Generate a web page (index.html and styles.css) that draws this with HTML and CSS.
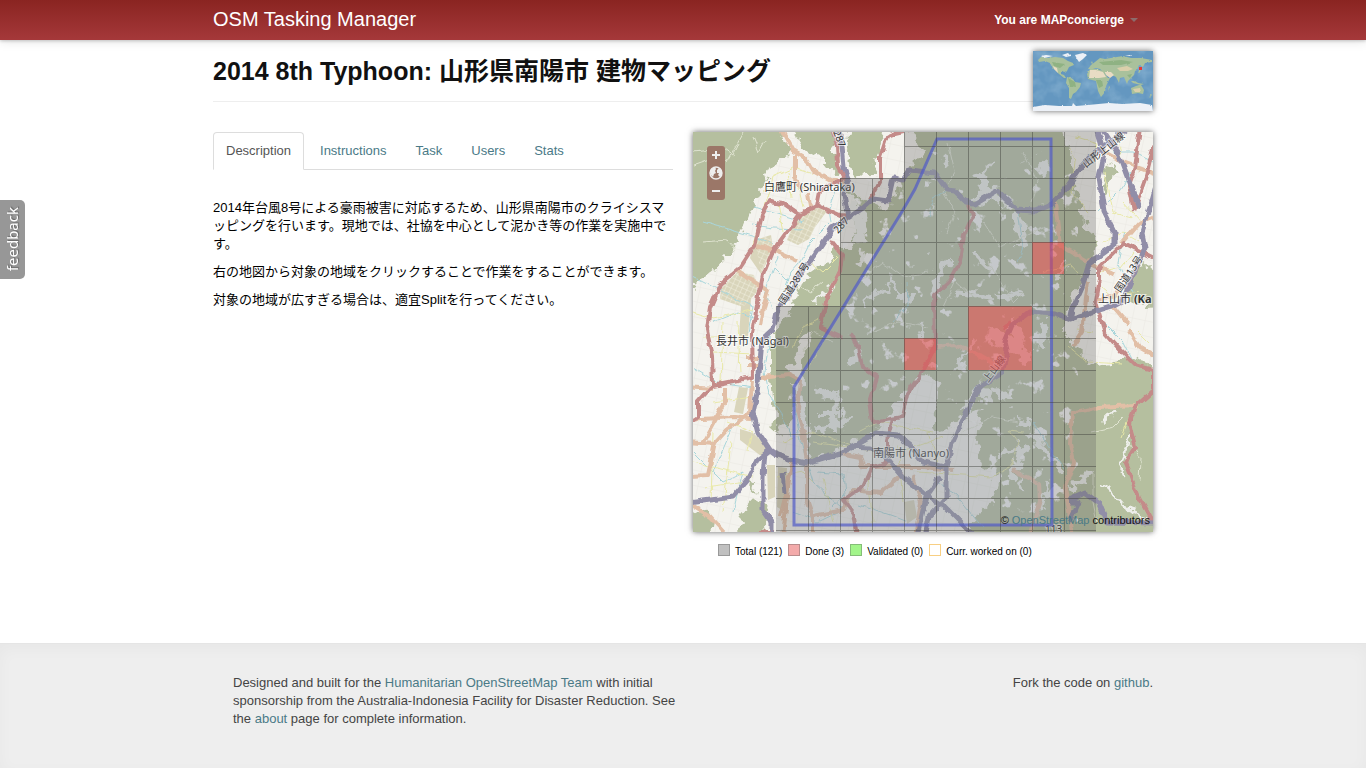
FILE: index.html
```html
<!DOCTYPE html>
<html lang="ja">
<head>
<meta charset="utf-8">
<meta name="viewport" content="width=device-width, initial-scale=1">
<title>OSM Tasking Manager</title>
<link rel="stylesheet" href="styles.css">
</head>
<body>
<header class="navbar">
  <div class="container navbar-inner">
    <a class="brand" href="#">OSM Tasking Manager</a>
    <button class="user-menu" type="button">You are MAPconcierge<span class="caret"></span></button>
  </div>
</header>

<main class="container">
  <div class="page-header">
    <h2 class="title">2014 8th Typhoon: 山形県南陽市 建物マッピング</h2>
    <svg class="overview" viewBox="0 0 120 60" role="img" aria-label="World overview">
      <defs>
        <filter id="coast" x="0" y="0" width="1" height="1"><feTurbulence type="fractalNoise" baseFrequency=".35" numOctaves="2" seed="4"/><feDisplacementMap in="SourceGraphic" scale="2" xChannelSelector="R" yChannelSelector="G"/></filter>
        <filter id="relief" x="0" y="0" width="1" height="1"><feTurbulence type="fractalNoise" baseFrequency=".07" numOctaves="3" seed="8"/><feColorMatrix values="0 0 0 0 .62  0 0 0 0 .8  0 0 0 0 .9  2.4 0 0 0 -1"/></filter>
      </defs>
      <rect width="120" height="60" fill="#6497c0"/>
      <rect width="120" height="60" filter="url(#relief)" opacity=".25"/>
      <g filter="url(#coast)">
        <g fill="#a9c19c">
          <path d="M5 9 8 6 15 7 22 6 30 7 35 10 40 12 41 14 36 16 34 20 32 22 32 21 28 20 28 23 31 24 33 27 31 27 26 23 23 20 19 16 17 12 12 10 6 11z"/>
          <path d="M34 26 40 28 42 31 48 32 47 36 43 41 40 43 38 48 36 47 36 37 33 32z"/>
          <path d="M55 18 58 14 62 11 67 7 72 8 78 7 90 5 98 7 108 7 119 9 119 11 112 12 110 16 106 14 104 19 102 20 101 24 98 27 95 30 94 33 91 26 87 27 86 32 83 26 79 24 75 25 72 23 69 20 67 18 63 17 60 18z"/>
          <path d="M57 18 64 18 70 20 75 27 77 27 73 35 72 41 68 46 65 40 63 30 55 28 54 23z"/>
          <path d="M98 37 103 35 106 34 108 34 111 39 110 43 105 42 99 43z"/>
          <path d="M98 30 102 30 105 32 111 33 108 34 100 32zM107 17 108 17 107 21 105 22zM118 43 119 44 116 47zM58 12 59 10 60 13zM76 35 77 36 75 40z"/>
        </g>
        <path d="M57 19 63 19 70 21 73 26 66 27 56 27zM72 21 78 21 81 24 77 27 73 24zM20 15 24 17 25 22 21 18z" fill="#e8dcc4"/>
        <path d="M84 17 94 15 100 18 95 20 87 20zM100 38 107 37 108 41 102 41z" fill="#dacfab"/>
        <path d="M35 27 42 31 43 36 37 35zM63 29 69 29 70 35 66 37zM66 11 88 9 100 11 88 14 70 14zM19 11 32 13 27 17 21 15zM94 24 99 23 97 27z" fill="#8fb283"/>
        <path d="M42 4 50 2 54 4 50 8 46 11 44 8zM29 4 35 2 38 5 33 6zM8 5 13 4 20 5 11 7zM92 4 98 4 97 5zM0 56 12 54 26 55 39 55 40 52 43 55 55 54 76 52 89 53 107 52 119 54 120 60 0 60z" fill="#edf1f7"/>
      </g>
      <rect x="106" y="16" width="3" height="3" fill="#e53935"/>
    </svg>
  </div>

  <div class="columns">
    <section class="details">
      <nav>
        <ul class="tabs">
          <li><a class="tab active" href="#description">Description</a></li>
          <li><a class="tab" href="#instructions">Instructions</a></li>
          <li><a class="tab" href="#task">Task</a></li>
          <li><a class="tab" href="#users">Users</a></li>
          <li><a class="tab" href="#stats">Stats</a></li>
        </ul>
      </nav>
      <div class="description" id="description">
        <p>2014年台風8号による豪雨被害に対応するため、山形県南陽市のクライシスマッピングを行います。現地では、社協を中心として泥かき等の作業を実施中です。</p>
        <p>右の地図から対象の地域をクリックすることで作業をすることができます。</p>
        <p>対象の地域が広すぎる場合は、適宜Splitを行ってください。</p>
      </div>
    </section>

    <section class="map-column">
      <div class="map">
        <svg class="map-canvas" viewBox="0 0 460 400" role="img" aria-label="Task map of Nanyo">
          <defs>
            <filter id="rough" x="-.05" y="-.05" width="1.1" height="1.1"><feTurbulence type="fractalNoise" baseFrequency=".09" numOctaves="3" seed="3"/><feDisplacementMap in="SourceGraphic" scale="17" xChannelSelector="R" yChannelSelector="G"/></filter>
            <filter id="wobble" x="-.05" y="-.05" width="1.1" height="1.1"><feTurbulence type="fractalNoise" baseFrequency=".1" numOctaves="2" seed="9"/><feDisplacementMap in="SourceGraphic" scale="6" xChannelSelector="R" yChannelSelector="G"/></filter>
            <filter id="clearings" x="0" y="0" width="1" height="1"><feTurbulence type="fractalNoise" baseFrequency=".065" numOctaves="4" seed="21"/><feColorMatrix values="0 0 0 0 .93  0 0 0 0 .93  0 0 0 0 .92  14 0 0 0 -9.1"/></filter>
            <pattern id="blocks" width="5" height="5" patternUnits="userSpaceOnUse" patternTransform="rotate(25)"><path d="M0 0H5M0 0V5" stroke="#f1efdf" stroke-width="1"/></pattern>
            <pattern id="streets" width="13" height="15" patternUnits="userSpaceOnUse" patternTransform="rotate(12)"><path d="M0 0H13M0 0V15" stroke="#e9e7e2" stroke-width="1"/></pattern>
            <clipPath id="hills"><path d="M150 46H300L385 0V390H290L300 345 270 290 220 250 150 300z"/></clipPath>
          </defs>
          <rect width="460" height="400" fill="#f4f3ee"/>
          <rect width="460" height="400" fill="url(#streets)"/>

          <g fill="#d9d5bb">
            <path d="M104 83 127 75 134 79 122 95 116 107 105 113 94 108zM62 108 78 103 80 117 68 142 57 126zM44 140 61 143 64 160 50 175 27 167 28 157zM48 174 58 166 55 204 46 205zM46 255 55 256 50 282 41 280zM47 297 60 301 76 316 68 324 47 308zM74 333 82 333 82 365 75 368z"/>
            <path d="M211 370 221 368 224 385 214 392zM85 335 94 336 92 380 84 375z"/>
          </g>
          <path d="M104 83 127 75 134 79 122 95 116 107 105 113 94 108zM44 140 61 143 64 160 50 175 27 167 28 157zM62 108 78 103 80 117 68 142z" fill="url(#blocks)"/>

          <g fill="#b5bf9f" filter="url(#rough)">
            <path d="M-10-10H82L98 17 84 29 74 46 62 68 51 95 44 110 34 123 23 137 0 156H-10z"/>
            <path d="M94-10H139L143 20 144 46 132 33 125 24 112 18z"/>
            <path d="M157-10H192L186 20 180 44 159 43 153 16z"/>
            <path d="M150 54 163 75 160 90 164 112 152 116 144 116 130 134 108 150 99 175 88 190 78 200 78 240 82 300 98 292 101 260 98 235 108 205 120 198 108 232 110 270 115 298 118 330 147 318 163 310 185 298 206 270 216 255 232 242 246 252 244 275 240 300 256 295 270 285 290 276 285 300 283 320 290 335 306 345 298 370 280 385 276 415H470V236L440 228 404 234 384 218 372 207 370 180 383 160 390 140 402 122 404 110 390 90 382 50 377 20 372-10H214L230 20 214 44 190 78 174 70z"/>
            <path d="M432 160 440 136 452 132 470 140V175L450 176zM414 35 422 32 418 52 408 65zM-5 382 8 376 20 386 18 405H-5zM62 366 72 374 76 405H44L50 380zM54 350 64 352 62 360z"/>
          </g>
          <g clip-path="url(#hills)"><rect width="460" height="400" filter="url(#clearings)"/></g>

          <g class="valleys" filter="url(#rough)">
            <path stroke-width="10" d="M160 70 170 110M282 72 300 60 312 74M322 82 325 92 331 115M285 40 292 60M346 40 356 33M272 280 284 260 298 262M300 205 330 220 336 232M296 200 320 212M318 190 334 228"/>
            <path stroke-width="6" d="M170 120 165 135M255 128 240 160M280 120 296 136M262 160 300 165M306 165 330 160M338 300 350 315 370 338M325 290 338 294M300 255 318 270M246 20 253 35M205 162 220 168M120 258 150 270M128 282 150 282M140 260 142 300M123 298 158 286M156 236 170 212M350 215 352 190M306 320 330 315 320 345M377 360 395 340"/>
            <path stroke-width="3" d="M172 170 200 150 210 165M330 340 326 360M440 300 426 330 430 345M408 350 420 362 430 375 455 385M410 290 426 278M120 170 145 150M225 190 232 215M300 30 285 48M264 235 282 210M360 150 375 130M350 380 355 350"/>
          </g>
          <g class="paths" filter="url(#wobble)">
            <path d="M0 20 30 17 40 24 46 10M0 33 20 26 34 30 50 0M10 110 34 108 43 118M60 5 66 20 72 9M100 150 118 160 130 150M400 340 400 370 404 390M436 310 448 325 447 350M398 300 420 295 430 285M165 150 190 130 210 145 235 140M255 100 262 80 250 60 262 40 255 10M290 90 306 115 320 110 350 95M330 20 345 50 338 70M250 175 262 150 280 165M180 200 205 190 235 195M270 300 300 285 325 290M110 220 120 200 140 210M295 130 320 170 330 160"/>
          </g>
          <g class="streams" filter="url(#wobble)">
            <path d="M145 50 136 76 138 90 116 112 107 130 98 140 88 165 78 200 71 240 75 262 88 280 98 305M10 90 45 100 62 105 80 112M60 93 80 96 110 97M62 75 90 84 110 90M0 145 30 160 60 175 55 200M80 135 95 150M85 125 72 160 78 176M20 190 45 180 60 185M0 235 25 250 60 255M20 340 42 290 60 280M0 320 30 350 50 340 40 380M100 270 108 310 120 350 150 378M125 340 150 342 152 362 140 375M165 372 200 384 215 390M100 380 125 390 150 378M200 190 215 172 214 150M235 85 240 66 252 60M325 78 330 115 325 130M340 290 356 315 372 338M405 80 425 60 438 40M410 190 430 210 440 230M432 100 425 130 440 160M276 280 283 255M242 350 262 362 290 396M420 20 440 20 460 30"/>
          </g>
          <g class="minor" filter="url(#wobble)">
            <path d="M70 60 90 50 110 55 125 58M75 66 80 45 100 36 120 42M85 70 90 100M80 50 70 80 60 112M105 55 110 75M95 40 98 66M130 112 118 130 130 140 145 125M0 180 20 186 60 178M10 205 62 205M20 220 60 222M30 190 28 250M45 190 47 240M20 270 60 265M35 290 60 300 55 320M0 330 60 345M10 355 55 350M20 300 18 370M38 310 30 380M100 215 110 195 125 188M130 210 112 240M90 310 120 300 160 315M84 345 110 340 120 350M120 310 200 322 250 305M130 345 140 390M165 300 185 290 240 300M175 345 180 390M205 312 210 370M235 300 245 330M225 340 300 345 318 335 325 310 316 298 330 300M376 15 382 30 378 60 396 80M383 5 405 12 400 30M350 140 378 132 385 140M376 215 395 230 430 232M385 198 400 200M412 40 420 80 440 85M410 110 430 100 446 110M407 140 428 135 440 120M430 70 450 92M408 155 420 165 445 160M445 200 455 210M445 275 434 290 428 305M424 5 430 30 440 35"/>
          </g>

          <g class="secondary" filter="url(#wobble)">
            <path d="M87-5 100 19 112 26 119 38 137 48 152 51M102 23V46L110 58M64 113 87 121 104 129M44 138 75 159 70 176 67 194M115 61 117 75M-5 255 20 257M32 255V271L10 310M59 248 57 281 34 298 22 311 15 343-5 344M-5 288 40 285 60 286M-5 310 22 312M67 246 97 243 107 248 104 278 110 300 114 331 114 368 120 385V405M87 385 94 358 100 328M-5 371 17 385 35 405M53 226H66M53 234H66"/>
            <path d="M411 19 430 30 465 43M419 173 436 193M436 198 446 215 465 226M402 169 421 164 428 150M362 71 367 113 392 128 422 143M442 273 406 275 379 281 377 311 381 331 372 355 380 405M319 338 346 351 347 368 336 405M147 321 167 325 170 335 230 335 260 338M117 385 150 378 160 358 187 361 210 341M244 215 262 213 286 223 306 235M90 405 96 345M428 112 445 92 465 84M395 150 389 200 380 214M220 345 228 370 222 405"/>
          </g>
          <g class="primary" filter="url(#wobble)">
            <path d="M138-5 144 13 145 33 152 46 127 59 124 74 107 83 90 71 77 69 69 83 62 113 47 136 27 153 17 176 14 198 19 225 20 253 5 270V285L-5 292M107 83 79 121 70 143 65 169 59 201 60 245 20 253M124 73 147 83 158 84M137 108 149 123 147 139 134 166 127 196 150 206M215-2 202 1 194 4 187 26V49L177 68"/>
            <path d="M157 201 165 215 169 235 184 245 177 268 180 290 210 285 215 261 230 238 242 215 241 163 256 149 267 129 271 103 280 83 276 73M199 288 194 308V331L179 335 170 355 150 368 160 381 164 405M447-5 442 36 436 53 441 79M465 10 460 16 452 48 441 79M465 128 431 111 406 136V146L402 169 412 201 429 220 442 233 461 238V258L442 275 436 291 442 315 432 331 446 365 460 390M310 196 318 190M66 400H82"/>
          </g>
          <g class="trunk" filter="url(#wobble)">
            <path d="M145-5 149 13 151 35 156 46 151 63 155 85 140 96 122 123 104 146 97 163 85 176 80 198 69 208 67 231 64 261 60 281 65 300 77 318 84 323 100 328 114 331 147 321 160 315 184 301 204 303 217 313 230 330 252 335M77 318 64 328 54 348 40 365-5 371M72 321 70 345V378L79 391V405M155 86 170 76 180 67 195 69 200 46 210 48 217 38 242 41 254 58 262 59 274 71 282 72 304 59 324 78 342 79 357 73 372 58 387 36 396 26 432-3"/>
            <path d="M404-5 411 23 406 46 411 79 421 99V113L396 131 389 156 379 178 377 187M409-3 426 23 446 76M464 50 456 79 449 101 452 116 430 168 419 174 396 181 377 187 362 182 336 180 319 193 312 210 314 218 309 241 286 255 272 281 259 311 254 335V365L236 385 232 405M157 315 177 316 190 321 210 345 230 361 252 375 282 405M376 368 392 361 406 371 414 390 465 391M376 370 385 370 376 390M90 341 92 361M247 345 233 365 224 405"/>
          </g>

          <g class="label halo">
            <text x="71" y="59">白鷹町 (Shirataka)</text>
            <text x="23" y="213">長井市 (Nagai)</text>
            <text x="180" y="325">南陽市 (Nanyo)</text>
            <text x="405" y="171">上山市 <tspan font-weight="bold">(Ka</tspan></text>
          </g>
          <g class="road-label halo">
            <text transform="translate(91 173) rotate(-57)">国道287号</text>
            <text transform="translate(145 102) rotate(-48)">287</text>
            <text transform="translate(140 0) rotate(68)">287</text>
            <text transform="translate(393 36) rotate(-38)">山形上山線</text>
            <text transform="translate(427 161) rotate(-56)">国道13号</text>
            <text transform="translate(295 251) rotate(-53)">上山線</text>
            <text x="352" y="401">113</text>
          </g>

          <path class="tiles" d="M211 0H403V400H83V174H147V46H211z"/>
          <path class="area" d="M244 7 358 7 359 393H101V255L210 78 222 57z"/>
          <path class="done" d="M339 110H371V142H339zM275 174H339V238H275zM211 206H243V238H211z"/>
          <path class="grid" d="M211 0V400M243 0V400M275 0V400M307 0V174M307 238V400M339 0V400M371 0V400M179 46V400M147 46V400M115 174V400M211 14H403M147 46H403M147 78H403M147 110H403M147 142H403M83 174H403M83 206H275M339 206H403M83 238H403M83 270H403M83 302H403M83 334H403M83 366H403M83 398H403"/>
        </svg>
        <div class="zoom">
          <button type="button" aria-label="Zoom in"><svg viewBox="0 0 18 18"><path d="M9 5V13M5 9H13" stroke="#eee" stroke-width="2"/></svg></button>
          <button type="button" aria-label="Zoom to task"><svg viewBox="0 0 18 18"><circle cx="9" cy="9" r="6" fill="#9b7768" stroke="#eee" stroke-width="1.4"/><path d="M3 8 4 5 8 3 9 5 8 7 9 9 7 10 6 13 4 11zM10 6 12 4 15 7 15 10 13 13 11 11 12 9 10 9z" fill="#eee"/></svg></button>
          <button type="button" aria-label="Zoom out"><svg viewBox="0 0 18 18"><path d="M5 9H13" stroke="#eee" stroke-width="2"/></svg></button>
        </div>
        <div class="attribution">© <a href="#">OpenStreetMap</a> contributors</div>
      </div>
      <ul class="legend">
        <li><span class="swatch total"></span>Total (121)</li>
        <li><span class="swatch finished"></span>Done (3)</li>
        <li><span class="swatch validated"></span>Validated (0)</li>
        <li><span class="swatch working"></span>Curr. worked on (0)</li>
      </ul>
    </section>
  </div>
</main>

<footer class="footer">
  <div class="container footer-inner">
    <p class="credits">Designed and built for the <a href="#">Humanitarian OpenStreetMap Team</a> with initial sponsorship from the Australia-Indonesia Facility for Disaster Reduction. See the <a href="#">about</a> page for complete information.</p>
    <p>Fork the code on <a href="#">github</a>.</p>
  </div>
</footer>

<button class="feedback" type="button"><span>feedback</span></button>
</body>
</html>
```
FILE: styles.css
```css
* { box-sizing: border-box; }

body {
  margin: 0;
  min-height: 100vh;
  display: flex;
  flex-direction: column;
  background: #fff;
  color: #111;
  font: 13px/18px "Liberation Sans", "Noto Sans CJK JP", sans-serif;
}

a { color: #4a7a87; text-decoration: none; }
p { margin: 0 0 10px; }
ul { margin: 0; padding: 0; list-style: none; }
button { border: 0; padding: 0; background: none; font: inherit; cursor: pointer; }

.container { width: 100%; max-width: 940px; margin: 0 auto; }

.navbar {
  background: linear-gradient(#8a2421, #a5383a);
  box-shadow: 0 1px 3px rgba(0, 0, 0, .2), 0 2px 10px rgba(0, 0, 0, .1);
}
.navbar-inner {
  height: 40px;
  display: flex;
  align-items: center;
  justify-content: space-between;
}
.brand { color: #fff; font-size: 20px; line-height: 20px; padding-bottom: 2px; }
.user-menu {
  display: flex;
  align-items: center;
  gap: 6px;
  padding-right: 15px;
  color: #fff;
  font-size: 12px;
  font-weight: bold;
}
.caret {
  border: 4px solid transparent;
  border-top-color: #8d6b6b;
  border-bottom: 0;
}

.page-header { display: flex; margin-top: 11px; }
.title {
  flex: 1;
  height: 51px;
  margin: 0;
  border-bottom: 1px solid #eee;
  font-size: 25px;
  line-height: 40px;
}
.overview { width: 120px; height: 60px; box-shadow: 0 0 6px rgba(0, 0, 0, .6); }

.columns {
  display: grid;
  grid-template-columns: repeat(2, minmax(0, 1fr));
  gap: 20px;
  margin-top: 21px;
}

.tabs { display: flex; gap: 3px; border-bottom: 1px solid #ddd; }
.tab {
  display: block;
  margin-bottom: -1px;
  padding: 8px 12px;
  border: 1px solid transparent;
  border-radius: 4px 4px 0 0;
  line-height: 20px;
}
.tab.active { color: #555; background: #fff; border-color: #ddd #ddd #fff; }

.description { margin-top: 29px; color: #000; }

.map { position: relative; box-shadow: 0 0 6px rgba(0, 0, 0, .6); }
.map-canvas { display: block; width: 100%; height: auto; }

.valleys, .paths, .streams, .minor, .secondary, .primary, .trunk {
  fill: none;
  stroke-linejoin: round;
}
.valleys { stroke: #edeeea; }
.paths { stroke: #dfe3d0; stroke-width: 1; }
.streams { stroke: #a9d6db; stroke-width: 1; }
.minor { stroke: #e9e9a8; stroke-width: 1; }
.secondary { stroke: #e2bfa6; stroke-width: 4; }
.primary { stroke: #c48b89; stroke-width: 4; }
.trunk { stroke: #918ea8; stroke-width: 5; }

.label, .road-label { font-family: "Noto Sans", "Noto Sans CJK JP", sans-serif; fill: #333; }
.label { font-size: 11px; }
.road-label { font-size: 10px; }
.halo { paint-order: stroke; stroke: rgba(255, 255, 255, .7); stroke-width: 2; }

.tiles { fill: rgba(95, 95, 95, .3); }
.area { fill: rgba(185, 200, 215, .2); stroke: rgba(80, 90, 200, .7); stroke-width: 3; }
.done { fill: rgba(255, 60, 60, .45); }
.grid { fill: none; stroke: rgba(60, 60, 55, .45); stroke-width: 1; shape-rendering: crispEdges; }

.zoom {
  position: absolute;
  top: 14px;
  left: 14px;
  width: 18px;
  border-radius: 3px;
  background: #9b7768;
}
.zoom button, .zoom svg { display: block; width: 18px; height: 18px; }

.attribution {
  position: absolute;
  right: 3px;
  bottom: 3px;
  font-size: 11px;
}

.legend {
  display: flex;
  gap: 6px;
  margin: 11px 0 0 25px;
  color: #000;
  font-size: 10px;
}
.legend li { display: flex; align-items: center; gap: 5px; }
.swatch { width: 12px; height: 12px; margin-bottom: 4px; border: 1px solid; }
.total { background: #c0c0c0; border-color: #999; }
.finished { background: #f3aaaa; border-color: #b98c8c; }
.validated { background: #a2f58a; border-color: #85bd78; }
.working { background: #fff; border-color: #f8cf83; }

.footer {
  flex: 1;
  margin-top: 82px;
  padding: 30px 0;
  border-top: 1px solid #e5e5e5;
  background: #eee;
  box-shadow: inset 0 5px 15px rgba(0, 0, 0, .03);
  color: #444;
}
.footer-inner { display: flex; justify-content: space-between; padding-left: 20px; }
.credits { max-width: 460px; }

.feedback {
  position: fixed;
  top: 200px;
  left: 0;
  width: 25px;
  height: 79px;
  border-radius: 0 5px 5px 0;
  background: #979797;
  color: #fff;
  font: 15px/25px "Noto Sans", sans-serif;
  text-shadow: 1px 1px 1px #666;
}
.feedback span { display: block; writing-mode: vertical-rl; transform: rotate(180deg); }
```
